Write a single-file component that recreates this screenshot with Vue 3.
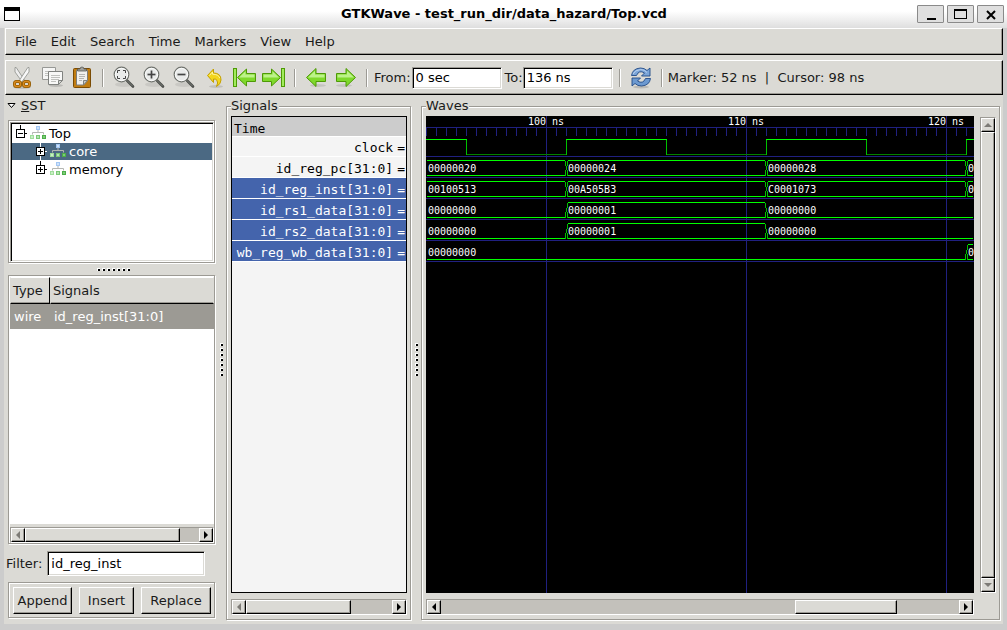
<script setup>
import { ref } from 'vue'

const menus = ['File', 'Edit', 'Search', 'Time', 'Markers', 'View', 'Help']
const from = ref('0 sec')
const to = ref('136 ns')
const filter = ref('id_reg_inst')

const signals = [
  { name: 'clock', selected: false },
  { name: 'id_reg_pc[31:0]', selected: false },
  { name: 'id_reg_inst[31:0]', selected: true },
  { name: 'id_rs1_data[31:0]', selected: true },
  { name: 'id_rs2_data[31:0]', selected: true },
  { name: 'wb_reg_wb_data[31:0]', selected: true }
]

const END = 547
const buses = [
  [[0, '00000020'], [140, '00000024'], [340, '00000028'], [540, '0']],
  [[0, '00100513'], [140, '00A505B3'], [340, 'C0001073'], [540, '0']],
  [[0, '00000000'], [140, '00000001'], [340, '00000000']],
  [[0, '00000000'], [140, '00000001'], [340, '00000000']],
  [[0, '00000000'], [540, '0', true]]
]

const isHigh = (seg) => Boolean(seg[2]) || seg[1] !== '00000000'

const rows = buses.map((segs, i) => {
  const top = 44.5 + i * 21
  const bottom = top + 15
  const mid = top + 7.5
  let rails = ''
  let cross = ''
  segs.forEach((seg, k) => {
    const start = k === 0 ? 1 : seg[0] + 2
    const end = k + 1 < segs.length ? segs[k + 1][0] - 1 : END
    rails += `M${start} ${bottom}H${end}`
    if (isHigh(seg)) rails += `M${start} ${top}H${end}`
    if (k > 0) {
      const x = seg[0] + 0.5
      cross += `M${x - 1} ${bottom}V${bottom - 4}L${x} ${mid}L${x + 1} ${bottom - 4}V${bottom}`
      if (isHigh(segs[k - 1])) cross += `M${x - 1} ${top}V${top + 4}L${x} ${mid}`
      if (isHigh(seg)) cross += `M${x + 1} ${top}V${top + 4}L${x} ${mid}`
    }
  })
  return { rails, cross, segs, baseline: 56 + i * 21 }
})

const ticks = Array.from({ length: 200 }, (_, i) => `M${i * 10 + 0.5} 11V20`).join('')
const gridRows = [40, 61, 82, 103, 124, 145]
const times = [[120, '100 ns'], [320, '110 ns'], [520, '120 ns']]

const listThumb = { width: '89%' }
const signalThumb = { width: '72%' }
const waveThumb = { marginLeft: '68.3%', width: '19.7%' }
</script>

<template>
  <div class="window">
    <header class="titlebar">
      <span class="app-icon"></span>
      <h1>GTKWave - test_run_dir/data_hazard/Top.vcd</h1>
      <div class="win-buttons">
        <button aria-label="Minimize"><svg width="14" height="14"><path d="M3 11h9v2H3z" /></svg></button>
        <button aria-label="Maximize"><svg width="14" height="14"><path d="M0 2h13v10H0zM1 4v7h11V4z" fill-rule="evenodd" /></svg></button>
        <button aria-label="Close"><svg width="14" height="14"><path d="M3 4l8 8M11 4l-8 8" stroke="#000" stroke-width="2" /></svg></button>
      </div>
    </header>

    <div class="client">
      <nav class="bar menubar">
        <button v-for="m in menus" :key="m">{{ m }}</button>
      </nav>

      <div class="bar toolbar">
        <button class="tool" aria-label="Cut">
          <svg width="24" height="24" viewBox="0 0 24 24">
            <ellipse cx="12" cy="21" rx="9" ry="2" fill="#000" opacity=".1" />
            <path d="M5 1.500h1.200l8.800 13.500-2 2L5 6z" fill="#eee" stroke="#8c8e89" stroke-width=".8" />
            <path d="M19 1.500h-1.200l-8.800 13.500 2 2L19 6z" fill="#f8f8f8" stroke="#8c8e89" stroke-width=".8" />
            <rect x="4.500" y="15.500" width="6" height="5" rx="2" fill="none" stroke="#8f5902" stroke-width="3" />
            <rect x="4.500" y="15.500" width="6" height="5" rx="2" fill="none" stroke="#d98a1e" stroke-width="1.400" />
            <rect x="13.500" y="15.500" width="6" height="5" rx="2" fill="none" stroke="#8f5902" stroke-width="3" />
            <rect x="13.500" y="15.500" width="6" height="5" rx="2" fill="none" stroke="#d98a1e" stroke-width="1.400" />
          </svg>
        </button>
        <button class="tool" aria-label="Copy">
          <svg width="24" height="24" viewBox="0 0 24 24">
            <path d="M2.500 1.500h13v13h-2l-3-1h-8z" fill="#f6f6f5" stroke="#979895" />
            <path d="M5 5.500h8M5 7.500h4M5 9.500h4" stroke="#c0c1be" />
            <ellipse cx="16" cy="19.500" rx="7" ry="1.500" fill="#000" opacity=".15" />
            <path d="M8.500 5.500h14v9l-4 4h-10z" fill="#f8f8f7" stroke="#80827f" />
            <path d="M11 9.500h9M11 11.500h9M11 13.500h8M11 15.500h5" stroke="#c0c1be" />
            <path d="M22.500 14.500h-4v4z" fill="#d5d6d3" stroke="#80827f" />
          </svg>
        </button>
        <button class="tool" aria-label="Paste">
          <svg width="24" height="24" viewBox="0 0 24 24">
            <rect x="3.500" y="2.500" width="17" height="19" rx="1" fill="#c17d11" stroke="#7a4b04" />
            <path d="M6.500 4.500h11v10l-4 4.500h-7z" fill="#f0f0ee" stroke="#7c7d7a" />
            <path d="M9 8.500h6M9 10.500h6M9 12.500h5M9 14.500h3" stroke="#b4b5b2" />
            <path d="M17.500 14.500h-4v4.500z" fill="#c9cac7" stroke="#80827f" />
            <path d="M7.500 5v-2h2.500q0-2 2-2t2 2h2.500v2z" fill="#a0a19e" stroke="#595a57" stroke-width=".8" />
          </svg>
        </button>
        <span class="sep"></span>
        <button v-for="z in ['Fit', 'In', 'Out']" :key="z" class="tool" :aria-label="'Zoom ' + z">
          <svg width="24" height="24" viewBox="0 0 24 24">
            <ellipse cx="12" cy="18.500" rx="9" ry="2.500" fill="#000" opacity=".08" />
            <path d="M15 14.500l6 6" stroke="#4a4c49" stroke-width="2.600" stroke-linecap="round" />
            <path d="M15 14.500l5.500 5.500" stroke="#8d908b" stroke-width=".8" stroke-linecap="round" />
            <circle cx="9.500" cy="8.500" r="7.300" fill="#e9ebea" stroke="#70736e" stroke-width="1.200" />
            <circle cx="9.500" cy="8.500" r="6.200" fill="none" stroke="#fff" stroke-width=".8" />
            <path v-if="z === 'Fit'" d="M5.500 7v-2.500h2.500M11 4.500h2.500v2.500M5.500 10v2.500h2.500M11 12.500h2.500v-2.500" fill="none" stroke="#444" />
            <path v-else d="M5.500 8.500h8" stroke="#444" stroke-width="1.700" />
            <path v-if="z === 'In'" d="M9.500 4.500v8" stroke="#444" stroke-width="1.700" />
          </svg>
        </button>
        <button class="tool" aria-label="Zoom undo">
          <svg width="24" height="24" viewBox="0 0 24 24">
            <ellipse cx="14" cy="20.500" rx="7" ry="1.500" fill="#000" opacity=".12" />
            <path d="M5.500 9.500l6-6.500v4q7.500 0 7.500 7 0 4-4.500 6.500 2-4 .5-6-1-1.800-3.500-1.500v3.500z" fill="#f3d61c" stroke="#c4a000" stroke-linejoin="round" />
            <path d="M7.500 9.500l3-3.500v2.200q6 0 7.300 4" fill="none" stroke="#fdf3a0" />
          </svg>
        </button>
        <button class="tool" aria-label="Zoom to start">
          <svg width="24" height="24" viewBox="0 0 24 24">
            <rect x="1.500" y="2.500" width="3" height="18" fill="#a0ec5c" stroke="#4e9a06" />
            <path d="M5.500 11.500l9-8.500v4.500h9v8h-9v4.500z" fill="#7fd92c" stroke="#4e9a06" stroke-linejoin="round" />
            <path d="M7 11.500l6.500-6.200v3.200h9v3z" fill="#bdf28a" />
          </svg>
        </button>
        <button class="tool" aria-label="Zoom to end">
          <svg width="24" height="24" viewBox="0 0 24 24">
            <rect x="19.500" y="2.500" width="3" height="18" fill="#a0ec5c" stroke="#4e9a06" />
            <path d="M18.500 11.500l-9-8.500v4.500h-9v8h9v4.500z" fill="#7fd92c" stroke="#4e9a06" stroke-linejoin="round" />
            <path d="M17 11.500l-6.500-6.200v3.200h-9v3z" fill="#bdf28a" />
          </svg>
        </button>
        <span class="sep"></span>
        <button class="tool" aria-label="Previous edge">
          <svg width="24" height="24" viewBox="0 0 24 24">
            <ellipse cx="14" cy="19.500" rx="8" ry="1.500" fill="#000" opacity=".1" />
            <path d="M2.500 11.500l9.500-9v5h9.500v8H12v5z" fill="#7fd92c" stroke="#4e9a06" stroke-linejoin="round" />
            <path d="M4 11.500l7-6.700v3.700h9.500v3z" fill="#bdf28a" />
          </svg>
        </button>
        <button class="tool" aria-label="Next edge">
          <svg width="24" height="24" viewBox="0 0 24 24">
            <ellipse cx="10" cy="19.500" rx="8" ry="1.500" fill="#000" opacity=".1" />
            <path d="M21.500 11.500l-9.500-9v5H2.500v8H12v5z" fill="#7fd92c" stroke="#4e9a06" stroke-linejoin="round" />
            <path d="M20 11.500l-7-6.700v3.700H3.500v3z" fill="#bdf28a" />
          </svg>
        </button>
        <span class="sep"></span>
        <label for="from" class="from">From:</label>
        <input id="from" v-model="from" class="sunken time-input" type="text" />
        <label for="to" class="to">To:</label>
        <input id="to" v-model="to" class="sunken time-input" type="text" />
        <span class="sep"></span>
        <button class="tool" aria-label="Reload">
          <svg width="24" height="24" viewBox="0 0 24 24">
            <ellipse cx="12" cy="21" rx="8" ry="1.500" fill="#000" opacity=".15" />
            <path d="M2.500 9.500q1-7 9-7.500 4 0 6.500 2.500l3-2.500v8h-8.500l3-3q-5.500-3.500-8 2.500z" fill="#7ba5d8" stroke="#204a87" stroke-width=".9" />
            <path d="M21.500 12.500q-1 7-9 7.500-4 0-6.500-2.500l-3 2.500v-8h8.500l-3 3q5.500 3.500 8-2.500z" fill="#6c99d0" stroke="#204a87" stroke-width=".9" />
            <path d="M4 8q2-4 7.500-4.500 4 0 6.500 3" fill="none" stroke="#b7cfee" />
          </svg>
        </button>
        <span class="sep"></span>
        <span class="status">Marker: 52 ns&nbsp; |&nbsp; Cursor: 98 ns</span>
      </div>

      <main>
        <aside>
          <button class="expander">
            <svg width="9" height="6"><path d="M1 .5h7l-3.500 4z" fill="#fff" stroke="#000" /></svg>
            <span><u>S</u>ST</span>
          </button>
          <div class="frame tree-frame">
            <ul class="sunken tree">
              <li v-for="(n, i) in ['Top', 'core', 'memory']" :key="n" :class="{ child: i > 0, selected: i === 1 }">
                <svg class="box" width="12" height="17">
                  <path v-if="i === 0" d="M4.500 0v5" stroke="#000" />
                  <path v-if="i > 0" d="M4.500 0v4" :stroke="i === 1 ? '#fff' : '#000'" />
                  <path v-if="i === 1" d="M4.500 13v4" stroke="#fff" />
                  <rect x=".5" y="4.500" width="8" height="8" fill="#fff" stroke="#000" />
                  <path d="M2 8.500h5" stroke="#000" />
                  <path d="M9 8.500h2" :stroke="i === 1 ? '#fff' : '#000'" />
                  <path v-if="i > 0" d="M4.500 6v5" stroke="#000" />
                </svg>
                <svg class="hier" width="16" height="15">
                  <path d="M8 4v3M2.500 8.500V6.500h11v2" fill="none" stroke="#b4b6b2" />
                  <rect x="6" y="0" width="4" height="4" fill="#a3c7f3" />
                  <rect x="7" y="1" width="2" height="2" fill="#cfe2fa" />
                  <rect x="0" y="9" width="4" height="4" fill="#a0dd9b" />
                  <rect x="1" y="10" width="2" height="2" fill="#c9efc6" />
                  <rect x="6" y="9" width="4" height="4" fill="#7cc877" />
                  <rect x="7" y="10" width="2" height="2" fill="#b4e4b0" />
                  <rect x="12" y="9" width="4" height="4" fill="#4cae48" />
                  <rect x="13" y="10" width="2" height="2" fill="#7ccc77" />
                </svg>
                <span>{{ n }}</span>
              </li>
            </ul>
          </div>
          <div class="grip across"><i v-for="d in 7" :key="d"></i></div>
          <div class="frame list-frame">
            <div class="list">
              <table>
                <thead><tr><th class="type">Type</th><th>Signals</th></tr></thead>
                <tbody><tr><td>wire</td><td>id_reg_inst[31:0]</td></tr></tbody>
              </table>
            </div>
            <div class="scroll">
              <button class="raised arrow off" aria-label="Scroll left"><svg width="6" height="8"><path d="M5 0v8L1 4z" /></svg></button>
              <div class="track"><div class="raised thumb" :style="listThumb"></div></div>
              <button class="raised arrow" aria-label="Scroll right"><svg width="6" height="8"><path d="M1 0v8l4-4z" /></svg></button>
            </div>
          </div>
          <div class="filter">
            <label for="filter">Filter:</label>
            <input id="filter" v-model="filter" class="sunken" type="text" />
          </div>
          <div class="frame actions">
            <button class="raised">Append</button>
            <button class="raised">Insert</button>
            <button class="raised">Replace</button>
          </div>
        </aside>

        <div class="grip down"><i v-for="d in 7" :key="d"></i></div>

        <fieldset class="signals">
          <legend>Signals</legend>
          <div class="names">
            <div class="time-head">Time</div>
            <div v-for="s in signals" :key="s.name" class="name" :class="{ selected: s.selected, first: s.name === 'clock' }">
              <span>{{ s.name }}</span><span class="eq">=</span>
            </div>
          </div>
          <div class="scroll">
            <button class="raised arrow off" aria-label="Scroll left"><svg width="6" height="8"><path d="M5 0v8L1 4z" /></svg></button>
            <div class="track"><div class="raised thumb" :style="signalThumb"></div></div>
            <button class="raised arrow" aria-label="Scroll right"><svg width="6" height="8"><path d="M1 0v8l4-4z" /></svg></button>
          </div>
        </fieldset>

        <div class="grip down narrow"><i v-for="d in 7" :key="d"></i></div>

        <fieldset class="waves">
          <legend>Waves</legend>
          <div class="wave-grid">
            <div class="canvas">
              <svg class="plot">
                <path :d="ticks" class="grid-line" />
                <line x1="0" x2="100%" y1="11.500" y2="11.500" class="grid-line" />
                <line v-for="y in gridRows" :key="y" x1="0" x2="100%" :y1="y + 0.5" :y2="y + 0.5" class="grid-line" />
                <line v-for="t in times" :key="t[0]" :x1="t[0] + 0.5" :x2="t[0] + 0.5" y1="0" y2="100%" class="grid-line" />
                <text v-for="t in times" :key="t[1]" :x="t[0] - 18" y="9">{{ t[1] }}</text>
                <path d="M40 38.500H140M240 38.500H340M440 38.500H540" stroke="#008000" />
                <path d="M40.500 23V39M140.500 23V39M240.500 23V39M340.500 23V39M440.500 23V39M540.500 23V39" stroke="#00c000" />
                <path d="M0 23.500H41M140 23.500H241M340 23.500H441M540 23.500H548" stroke="#00ff00" />
                <g v-for="(r, i) in rows" :key="i">
                  <path :d="r.rails" stroke="#00ff00" fill="none" />
                  <path :d="r.cross" stroke="#00c000" fill="none" />
                  <text v-for="s in r.segs" :key="s[0]" :x="s[0] + 2" :y="r.baseline">{{ s[1] }}</text>
                </g>
              </svg>
            </div>
            <div class="scroll vertical">
              <button class="raised arrow off" aria-label="Scroll up"><svg width="8" height="6"><path d="M0 5h8L4 1z" /></svg></button>
              <div class="raised thumb"></div>
              <button class="raised arrow off" aria-label="Scroll down"><svg width="8" height="6"><path d="M0 1h8L4 5z" /></svg></button>
            </div>
            <div class="scroll">
              <button class="raised arrow" aria-label="Scroll left"><svg width="6" height="8"><path d="M5 0v8L1 4z" /></svg></button>
              <div class="track"><div class="raised thumb" :style="waveThumb"></div></div>
              <button class="raised arrow" aria-label="Scroll right"><svg width="6" height="8"><path d="M1 0v8l4-4z" /></svg></button>
            </div>
          </div>
        </fieldset>
      </main>
    </div>
  </div>
</template>

<style>
body { margin: 0; }
</style>

<style scoped>
* { box-sizing: border-box; }
.window {
  display: flex;
  flex-direction: column;
  min-height: 100vh;
  background: #cccccc;
  color: #1a1a1a;
  font: 13px/21px "DejaVu Sans", sans-serif;
}
button, input {
  margin: 0;
  padding: 0;
  border: 0;
  border-radius: 0;
  background: none;
  color: inherit;
  font: inherit;
  outline: 0;
}
svg { display: block; flex: none; }

.titlebar {
  display: grid;
  grid-template-columns: 90px 1fr 90px;
  align-items: center;
  height: 28px;
  padding: 0 3px 1px 4px;
  background: linear-gradient(#fff 40%, #dedede);
}
.app-icon {
  width: 16px;
  height: 14px;
  border: 1px solid #000;
  border-top-width: 4px;
  background: #fff;
}
h1 {
  margin: 0;
  font-size: 13px;
  font-weight: bold;
  text-align: center;
  color: #000;
}
.win-buttons { display: flex; justify-content: flex-end; gap: 3px; }
.win-buttons button {
  display: grid;
  place-items: center;
  width: 27px;
  height: 18px;
  border: 1px solid #8a8a8a;
  border-radius: 1px;
  background: #dfdfdf;
}

.client {
  flex: 1;
  display: flex;
  flex-direction: column;
  margin: 0 4px 6px;
  background: #dbdad5;
}
.bar {
  display: flex;
  align-items: center;
  margin-left: 1px;
  border: 1px solid;
  border-color: #fff #000 #000 #fff;
  box-shadow: inset -1px -1px #9c9a94;
}
.menubar { height: 27px; margin-bottom: 5px; padding-left: 2px; }
.menubar button { padding: 0 7px; }
.toolbar { height: 35px; padding-left: 1px; }
.tool { display: grid; place-items: center; width: 30px; height: 30px; }
.sep {
  width: 2px;
  height: 18px;
  margin: 0 5px;
  border-left: 1px solid #9c9a94;
  background: #fff;
}
.toolbar label.from { margin: 0 1px; }
.toolbar label.to { margin-left: 3px; }
.sunken {
  border: 1px solid;
  border-color: #9c9a94 #fff #fff #9c9a94;
  background: #fff;
  box-shadow: inset 1px 1px #000, inset -1px -1px #dbdad5;
}
input.sunken { padding: 0 3px; color: #000; }
.time-input { width: 90px; height: 22px; }
.time-input + .sep { margin-left: 6px; }

main { flex: 1; display: flex; padding: 0 2px 4px; }
aside { flex: none; display: flex; flex-direction: column; width: 210px; padding-bottom: 1px; }
.expander { display: flex; align-items: center; gap: 5px; padding-left: 1px; margin-bottom: 4px; height: 21px; }
.frame {
  margin: 0 1px 1px 2px;
  padding: 1px 0 0 1px;
  border: 1px solid #9c9a94;
  box-shadow: 1px 1px #fff, inset 1px 1px #fff;
}
.tree-frame { height: 143px; }
.tree { height: 100%; margin: 0; padding: 2px 1px; list-style: none; color: #000; }
.tree li {
  display: flex;
  align-items: center;
  height: 18px;
  padding-left: 4px;
  border-bottom: 1px solid transparent;
  background-clip: padding-box;
}
.tree li.child { padding-left: 24px; }
.tree li.selected { background-color: #4b6983; color: #fff; }
.box { margin-right: 2px; }
.hier { margin-right: 3px; }

.grip { display: flex; align-items: center; justify-content: center; gap: 2px; }
.grip.across { height: 11px; padding-left: 5px; }
.grip.down { flex-direction: column; width: 10px; padding-top: 4px; }
.grip.narrow { width: 9px; }
.grip i {
  width: 3px;
  height: 3px;
  border: solid #fff;
  border-width: 1px 0 0 1px;
  background: #000;
}

.list-frame { flex: 1; display: flex; flex-direction: column; }
.list { flex: 1; margin-bottom: 3px; background: #fff; }
table { width: 100%; border-collapse: separate; border-spacing: 0; }
th {
  height: 27px;
  padding: 0 2px;
  border: 1px solid;
  border-color: #fff #dbdad5 #000 #dbdad5;
  background: #dbdad5;
  box-shadow: inset 0 -1px #9c9a94;
  font-weight: normal;
  text-align: left;
}
th.type { width: 40px; border-right-color: #000; }
td { height: 25px; padding: 0 4px; background: #9c9a94; color: #fff; }

.raised {
  border: 1px solid;
  border-color: #fff #000 #000 #fff;
  background: #dbdad5;
  box-shadow: inset -1px -1px #9c9a94;
}
.scroll {
  display: flex;
  height: 16px;
  border: 1px solid;
  border-color: #9c9a94 #fff #fff #9c9a94;
  background: #c3c1bb;
}
.track { flex: 1; display: flex; }
.arrow { display: grid; place-items: center; flex: none; width: 14px; height: 14px; fill: #000; }
.arrow.off { fill: #7d7b76; }
.vertical { flex-direction: column; height: auto; margin-top: 1px; }
.vertical .thumb { flex: 1; }

.filter { display: flex; align-items: center; gap: 5px; height: 37px; }
.filter input { width: 158px; height: 25px; }
.actions { display: grid; grid-template-columns: 59fr 55fr 70fr; gap: 7px; padding: 4px 3px 4px 4px; height: 36px; }
.actions .raised { height: 27px; }

fieldset {
  display: flex;
  flex-direction: column;
  min-width: 0;
  margin: 0 1px 0 0;
  padding: 0 3px 4px 4px;
  border: 1px solid #9c9a94;
  box-shadow: 1px 1px #fff, inset 1px 1px #fff;
}
legend { margin: 0 0 -2px; padding: 0 1px 2px 0; background: #dbdad5; }
.signals { flex: none; width: 185px; }
.waves { flex: 1; }
.names {
  flex: 1;
  margin-bottom: 6px;
  border: 1px solid #000;
  background: #f4f4f4;
  color: #000;
  font-family: "DejaVu Sans Mono", monospace;
}
.time-head { height: 20px; padding: 1px 2px; border-bottom: 1px solid #fff; background: #cccccc; }
.name {
  display: flex;
  justify-content: flex-end;
  gap: 4px;
  height: 21px;
  padding: 1px 1px 0 0;
  border-bottom: 1px solid #fff;
  white-space: nowrap;
}
.name.first { height: 20px; padding-top: 0; }
.name.selected { background: #4464ac; color: #fff; }
.wave-grid {
  flex: 1;
  display: grid;
  grid-template: 1fr 16px / 1fr 16px;
  gap: 6px;
}
.canvas { display: grid; min-width: 0; background: #000; overflow: hidden; }
.plot { width: 100%; height: 100%; }
.plot text { fill: #fff; font: 10px "DejaVu Sans Mono", monospace; }
.plot path, .plot line { shape-rendering: crispEdges; }
.plot .grid-line { stroke: #202080; }
</style>
